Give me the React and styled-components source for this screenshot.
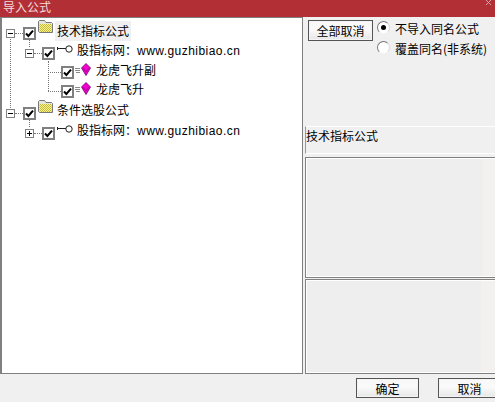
import React from 'react'
import styled, { createGlobalStyle } from 'styled-components'

const Global = createGlobalStyle`
  html, body { margin: 0; padding: 0; background: #f0f0f0; }
  * { box-sizing: border-box; }
`

const FONT = `"Noto Sans CJK SC", "Liberation Sans", sans-serif`

const Win = styled.div`
  width: 495px;
  height: 402px;
  display: flex;
  flex-direction: column;
  overflow: hidden;
  background: #f0f0f0;
  font: 12px ${FONT};
  color: #000;
`
const TitleBar = styled.div`
  height: 17px;
  flex: none;
  display: flex;
  justify-content: space-between;
  background: #b22f35;
  color: #f6dcdc;
  line-height: 13px;
  padding: 0 1px 0 3px;
`
const Body = styled.div`
  height: 357px;
  flex: none;
  display: flex;
`
const TreePane = styled.div`
  width: 303px;
  flex: none;
  background: #fff;
  border: 1px solid #808080;
  border-left-width: 2px;
  padding: 5px 0 0 4px;
`
const Branch = styled.div`
  padding-left: 19px;
`
const Node = styled.div`
  position: relative;
  margin-top: ${p => p.$gap || 0}px;
  &::before {
    content: ${p => (p.$guide ? '""' : 'none')};
    position: absolute;
    left: 4px;
    top: ${p => p.$guide && p.$guide[0]}px;
    height: ${p => p.$guide && p.$guide[1]}px;
    border-left: 1px dotted #777;
  }
`
const Row = styled.div`
  display: flex;
  align-items: center;
  height: ${p => p.$h || 20}px;
`
const Expander = styled.span`
  width: 9px;
  height: 9px;
  flex: none;
  border: 1px solid #808080;
  background: #fff;
  position: relative;
  &::before {
    content: '';
    position: absolute;
    left: 1px;
    right: 1px;
    top: 3px;
    height: 1px;
    background: #000;
  }
  &::after {
    content: ${p => (p.$closed ? '""' : 'none')};
    position: absolute;
    top: 1px;
    bottom: 1px;
    left: 3px;
    width: 1px;
    background: #000;
  }
`
const Stub = styled.span`
  width: ${p => p.$w}px;
  flex: none;
  margin-left: ${p => p.$ml || 0}px;
  border-top: 1px dotted #777;
`
const Box = styled.span`
  width: 13px;
  height: 13px;
  flex: none;
  display: flex;
  align-items: center;
  justify-content: center;
  border: 2px solid #808080;
  background: #fff;
`
const Label = styled.span`
  height: 20px;
  line-height: 20px;
  margin-top: -${p => p.$up || 5}px;
  margin-left: ${p => p.$ml || 0}px;
  padding: 0 2px;
  white-space: nowrap;
  background: ${p => (p.$active ? '#f0f0f0' : 'transparent')};
`
const Url = styled.span`
  font-family: "Liberation Sans", sans-serif;
  letter-spacing: 0.45px;
`
const Side = styled.div`
  flex: 1;
  display: flex;
  flex-direction: column;
  min-width: 0;
  padding-left: 2px;
`
const Options = styled.div`
  height: 109px;
  flex: none;
  display: flex;
  align-items: flex-start;
  padding: 3px 0 0 3px;
`
const Push = styled.button`
  width: ${p => p.$w}px;
  height: ${p => p.$h}px;
  flex: none;
  padding: 0;
  font: 12px ${FONT};
  color: #000;
  border: 1px solid #555;
  box-shadow: inset 0 0 0 1px #f4f4f4;
  background: linear-gradient(#f8f8f8, #fafafa 45%, #e6e6e6);
`
const RadioGroup = styled.div`
  display: flex;
  flex-direction: column;
  margin: -2px 0 0 4px;
`
const RadioRow = styled.label`
  display: flex;
  align-items: center;
  height: 20px;
  white-space: nowrap;
`
const Dot = styled.span`
  width: 13px;
  height: 13px;
  flex: none;
  border-radius: 50%;
  background: #fff;
  border: 1px solid;
  border-color: #777 #d8d8d8 #f4f4f4 #777;
  margin: -1px 5px 0 0;
  display: flex;
  align-items: center;
  justify-content: center;
  &::after {
    content: ${p => (p.$on ? '""' : 'none')};
    width: 5px;
    height: 5px;
    border-radius: 50%;
    background: #000;
  }
`
const Caption = styled.div`
  height: 28px;
  flex: none;
  border-top: 1px solid #fff;
  border-bottom: 1px solid #fff;
  border-left: 1px solid #999;
  line-height: 17px;
  white-space: nowrap;
`
const Panel = styled.div`
  height: ${p => p.$h}px;
  flex: none;
  margin-top: ${p => p.$mt}px;
  border: 1px solid #808080;
  border-right: 0;
  box-shadow: inset 1px 1px 0 #fff, inset 0 -1px 0 #fff;
  background: linear-gradient(to right, #eeeeee 0 ${p => p.$split}px, #f2f1f0 ${p => p.$split}px);
`
const Footer = styled.div`
  flex: 1;
  display: flex;
  gap: 19px;
  padding: 4px 0 0 356px;
`

const CloseMark = () => (
  <svg width="9" height="6" viewBox="0 0 9 6" style={{ flex: 'none' }}>
    <path d="M1 0 L6 5 M6 0 L1 5" stroke="#dba4a6" fill="none" />
  </svg>
)

const Check = () => (
  <Box>
    <svg width="9" height="9" viewBox="0 0 9 9">
      <path d="M1 4.5 L3.4 7 L8 1.6" fill="none" stroke="#000" strokeWidth="2" />
    </svg>
  </Box>
)

const Folder = () => (
  <svg width="15" height="13" viewBox="0 0 15 13" style={{ margin: '-13px 0 0 2px', flex: 'none' }}>
    <defs>
      <pattern id="dither" width="2" height="2" patternUnits="userSpaceOnUse">
        <rect width="2" height="2" fill="#fdf58a" />
        <rect width="1" height="1" fill="#bdb83e" />
        <rect x="1" y="1" width="1" height="1" fill="#bdb83e" />
      </pattern>
    </defs>
    <path d="M0.5 11.5 V1.5 L1.5 0.5 H6.5 L8 2.5 H13.5 L14.5 3.5 V12.5 H1.5 Z" fill="#e6e6d8" stroke="#777" />
    <rect x="1.5" y="4" width="12" height="8" fill="url(#dither)" />
  </svg>
)

const Key = () => (
  <svg width="16" height="8" viewBox="0 0 16 8" style={{ margin: '-8px 0 0 2px', flex: 'none' }}>
    <path d="M0.5 2 V5 M0 3.5 H9" stroke="#222" fill="none" />
    <circle cx="12" cy="4" r="3.2" fill="#fff" stroke="#222" />
  </svg>
)

const Gem = () => (
  <svg width="17" height="13" viewBox="0 0 17 13" style={{ margin: '-6px 0 0 1px', flex: 'none' }}>
    <path d="M0 5.5 H5 M0 7.5 H5 M1 9.5 H5" stroke="#8a8a8a" fill="none" />
    <path d="M11 0.5 L15.5 5 L11 12.5 L6.5 5 Z" fill="#f400d0" stroke="#6d0064" strokeWidth="0.8" />
    <path d="M8 5 L11 9 L14 5" fill="none" stroke="#9a0088" strokeWidth="0.7" />
  </svg>
)

const Site = ({ closed }) => (
  <Row>
    <Expander $closed={closed} />
    <Stub $w={8} />
    <Check />
    <Key />
    <Label $ml={2} $up={6}>股指标网：<Url>www.guzhibiao.cn</Url></Label>
  </Row>
)

const Leaf = ({ name }) => (
  <Row $h={19}>
    <Stub $w={13} $ml={4} />
    <Check />
    <Gem />
    <Label $ml={2}>{name}</Label>
  </Row>
)

export default function App() {
  return (
    <Win>
      <Global />
      <TitleBar>
        导入公式
        <CloseMark />
      </TitleBar>
      <Body>
        <TreePane>
          <Node $guide={[14, 71]}>
            <Row>
              <Expander />
              <Stub $w={8} />
              <Check />
              <Folder />
              <Label $active $ml={2}>技术指标公式</Label>
            </Row>
            <Branch>
              <Node $guide={[-3, 7]}>
                <Site />
                <Branch>
                  <Node $guide={[-2, 30]}>
                    <Leaf name="龙虎飞升副" />
                    <Leaf name="龙虎飞升" />
                  </Node>
                </Branch>
              </Node>
            </Branch>
          </Node>
          <Node $gap={2}>
            <Row>
              <Expander />
              <Stub $w={8} />
              <Check />
              <Folder />
              <Label $ml={2} $up={6}>条件选股公式</Label>
            </Row>
            <Branch>
              <Node $guide={[-3, 7]}>
                <Site closed />
              </Node>
            </Branch>
          </Node>
        </TreePane>
        <Side>
          <Options>
            <Push $w={65} $h={21}>全部取消</Push>
            <RadioGroup>
              <RadioRow><Dot $on />不导入同名公式</RadioRow>
              <RadioRow><Dot />覆盖同名(非系统)</RadioRow>
            </RadioGroup>
          </Options>
          <Caption>技术指标公式</Caption>
          <Panel $h={121} $mt={3} $split={177} />
          <Panel $h={95} $mt={1} $split={175} />
        </Side>
      </Body>
      <Footer>
        <Push $w={63} $h={20}>确定</Push>
        <Push $w={63} $h={20}>取消</Push>
      </Footer>
    </Win>
  )
}
